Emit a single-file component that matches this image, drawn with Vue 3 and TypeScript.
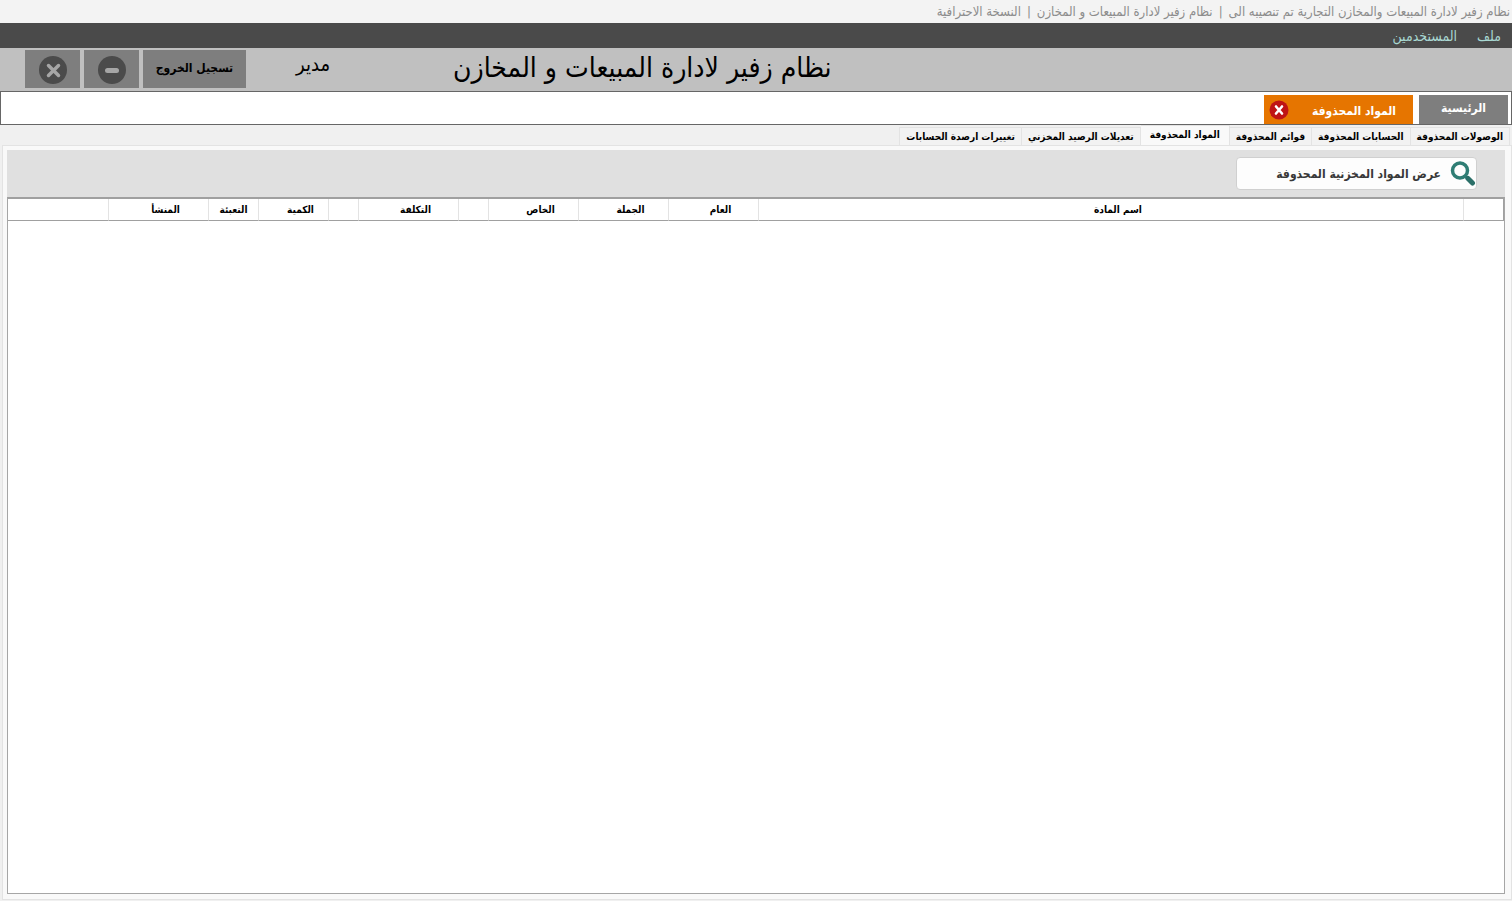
<script setup lang="ts">
import { ref } from 'vue'

interface Column {
  label: string
  width: number | null
}

const captions: string[] = [
  'نظام زفير لادارة المبيعات والمخازن التجارية تم تنصيبه الى',
  'نظام زفير لادارة المبيعات و المخازن',
  'النسخة الاحترافية',
]

const menus: string[] = ['ملف', 'المستخدمين']

const sections: string[] = [
  'الوصولات المحذوفة',
  'الحسابات المحذوفة',
  'قوائم المحذوفة',
  'المواد المحذوفة',
  'تعديلات الرصيد المخزني',
  'تغييرات ارصدة الحسابات',
]
const activeSection = ref<number>(3)

const columns: Column[] = [
  { label: '', width: 41 },
  { label: 'اسم المادة', width: null },
  { label: 'العام', width: 90 },
  { label: 'الجملة', width: 90 },
  { label: 'الخاص', width: 90 },
  { label: '', width: 30 },
  { label: 'التكلفة', width: 100 },
  { label: '', width: 30 },
  { label: 'الكمية', width: 70 },
  { label: 'التعبئة', width: 50 },
  { label: 'المنشأ', width: 100 },
  { label: '', width: 100 },
]

const isNarrow = (c: Column): boolean => c.width !== null && c.width <= 50
</script>

<template>
  <div class="window" dir="rtl">
    <div class="titlebar">
      <template v-for="(c, i) in captions" :key="c">
        <span v-if="i > 0">|</span>
        <span>{{ c }}</span>
      </template>
    </div>

    <nav class="menubar">
      <button v-for="m in menus" :key="m" type="button" class="menu">{{ m }}</button>
    </nav>

    <header class="header">
      <h1 class="title">نظام زفير لادارة المبيعات و المخازن</h1>
      <span class="user">مدير</span>
      <div class="actions">
        <button type="button" class="action logout">تسجيل الخروج</button>
        <button type="button" class="action" aria-label="تصغير">
          <svg width="28" height="28" viewBox="0 0 28 28">
            <circle cx="14" cy="14" r="14" fill="#4b4b4b" />
            <path d="M9.500 14.500h9" stroke="#a6a6a6" stroke-width="5" stroke-linecap="round" />
          </svg>
        </button>
        <button type="button" class="action" aria-label="اغلاق">
          <svg width="28" height="28" viewBox="0 0 28 28">
            <circle cx="14" cy="14" r="14" fill="#4b4b4b" />
            <path d="M9.500 9.500l10 10M19.500 9.500l-10 10" stroke="#a6a6a6" stroke-width="3.500" stroke-linecap="round" />
          </svg>
        </button>
      </div>
    </header>

    <div class="pages">
      <button type="button" class="page home">الرئيسية</button>
      <div class="page current">
        <button type="button" class="page-label">المواد المحذوفة</button>
        <button type="button" class="page-close" aria-label="اغلاق الصفحة">
          <svg width="20" height="20" viewBox="0 0 20 20">
            <circle cx="10" cy="10" r="9.500" fill="#bf1414" />
            <path d="M7 6.500l6 7M13 6.500l-6 7" stroke="#fff" stroke-width="2.600" stroke-linecap="round" />
          </svg>
        </button>
      </div>
    </div>

    <div class="sections" role="tablist">
      <button
        v-for="(s, i) in sections"
        :key="s"
        type="button"
        role="tab"
        class="section"
        :class="{ active: i === activeSection }"
        :aria-selected="i === activeSection"
        @click="activeSection = i"
      >
        {{ s }}
      </button>
    </div>

    <main class="panel">
      <div class="toolbar">
        <button type="button" class="show">
          <svg width="26" height="26" viewBox="0 0 26 26" fill="none">
            <circle cx="10" cy="9.500" r="7.500" stroke="#2f7d74" stroke-width="3.500" />
            <path d="M15 15l2.500 2.500" stroke="#2f7d74" stroke-width="3" />
            <path d="M18 17.500l4.500 4.500" stroke="#2b6f68" stroke-width="5" stroke-linecap="round" />
          </svg>
          <span>عرض المواد المخزنية المحذوفة</span>
        </button>
      </div>
      <div class="grid">
        <table>
          <colgroup>
            <col v-for="(c, i) in columns" :key="i" :style="c.width ? { width: c.width + 'px' } : {}" />
          </colgroup>
          <thead>
            <tr>
              <th v-for="(c, i) in columns" :key="i" scope="col" :class="{ narrow: isNarrow(c) }">{{ c.label }}</th>
            </tr>
          </thead>
        </table>
      </div>
    </main>
  </div>
</template>

<style>
body {
  margin: 0;
  background: #f0f0f0;
}
</style>

<style scoped>
.window {
  box-sizing: border-box;
  min-height: 100vh;
  display: flex;
  flex-direction: column;
  padding-bottom: 1px;
  background: #f0f0f0;
  color: #000;
  font-family: "DejaVu Sans Condensed", "DejaVu Sans", sans-serif;
  font-size: 10px;
}

button {
  margin: 0;
  padding: 0;
  border: 0;
  background: none;
  color: inherit;
  font: inherit;
  cursor: pointer;
}

svg {
  display: block;
}

.titlebar {
  display: flex;
  gap: 6px;
  height: 23px;
  padding: 0 2px;
  background: #f3f3f3;
  color: #8c8c8c;
  font-size: 13px;
  line-height: 24px;
  white-space: nowrap;
  overflow: hidden;
}

.menubar {
  display: flex;
  gap: 20px;
  height: 25px;
  padding: 0 11px;
  background: #4a4a4a;
  color: #a9d8d2;
  font-size: 14px;
}

.header {
  display: flex;
  height: 43px;
  background: #c0c0c0;
}

.title {
  margin: 0 45% 0 0;
  font-size: 28px;
  font-weight: 400;
  line-height: 40px;
  white-space: nowrap;
}

.user {
  margin-right: auto;
  font-size: 20px;
  line-height: 32px;
}

.actions {
  display: flex;
  gap: 4px;
  margin: 2px 50px 0 25px;
}

.action {
  display: flex;
  align-items: center;
  justify-content: center;
  box-sizing: border-box;
  width: 55px;
  height: 38px;
  padding-top: 2px;
  background: #7e7e7e;
}

.logout {
  width: 103px;
  padding: 0 0 2px;
  font-size: 12px;
  font-weight: 700;
}

.pages {
  display: flex;
  gap: 6px;
  height: 29px;
  padding: 3px 3px 0;
  border: 1px solid #666;
  background: #fff;
}

.page {
  color: #fff;
  font-size: 12px;
  font-weight: 700;
}

.home {
  width: 89px;
  padding-bottom: 3px;
  background: #7e7e7e;
}

.current {
  display: flex;
  align-items: center;
  justify-content: space-between;
  box-sizing: border-box;
  width: 149px;
  padding: 0 17px 0 5px;
  background: #e67500;
}

.page-label {
  padding-top: 2px;
}

.sections {
  display: flex;
  align-items: flex-end;
  height: 20px;
  padding: 0 2px;
}

.section {
  height: 18px;
  padding: 0 6px;
  border: 1px solid #e3e3e3;
  border-width: 1px 1px 0 0;
  background: #f2f2f2;
  font-weight: 700;
  white-space: nowrap;
}

.section:last-child {
  border-left-width: 1px;
}

.section.active {
  height: 21px;
  margin-bottom: -1px;
  padding: 0 9px 4px;
  background: #f9f9f9;
}

.panel {
  flex: 1;
  display: flex;
  flex-direction: column;
  margin: 0 0 0 2px;
  padding: 4px 6px 5px 4px;
  border: 1px solid #e3e3e3;
  background: #f9f9f9;
}

.toolbar {
  height: 33px;
  padding: 7px 28px;
  background: #e0e0e0;
}

.show {
  display: flex;
  align-items: center;
  gap: 9px;
  box-sizing: border-box;
  width: 241px;
  height: 33px;
  padding: 1px 0 0;
  border: 1px solid #d0d0d0;
  border-radius: 4px;
  background: #fdfdfd;
  color: #383838;
  font-size: 12px;
  font-weight: 700;
  white-space: nowrap;
}

.grid {
  flex: 1;
  border: 1px solid #a6a6a6;
  border-top: 2px solid #a0a0a0;
  background: #fff;
}

table {
  width: 100%;
  table-layout: fixed;
  border-collapse: separate;
  border-spacing: 0;
}

th {
  height: 21px;
  padding: 0 0 0 14px;
  border-left: 1px solid #e3e3e3;
  border-bottom: 1px solid #a0a0a0;
  font-size: 10px;
  font-weight: 700;
  line-height: 21px;
  white-space: nowrap;
}

th.narrow {
  padding: 0;
}

th:first-child {
  border-right: 1px solid #a0a0a0;
}

th:last-child {
  border-left: 0;
}
</style>
